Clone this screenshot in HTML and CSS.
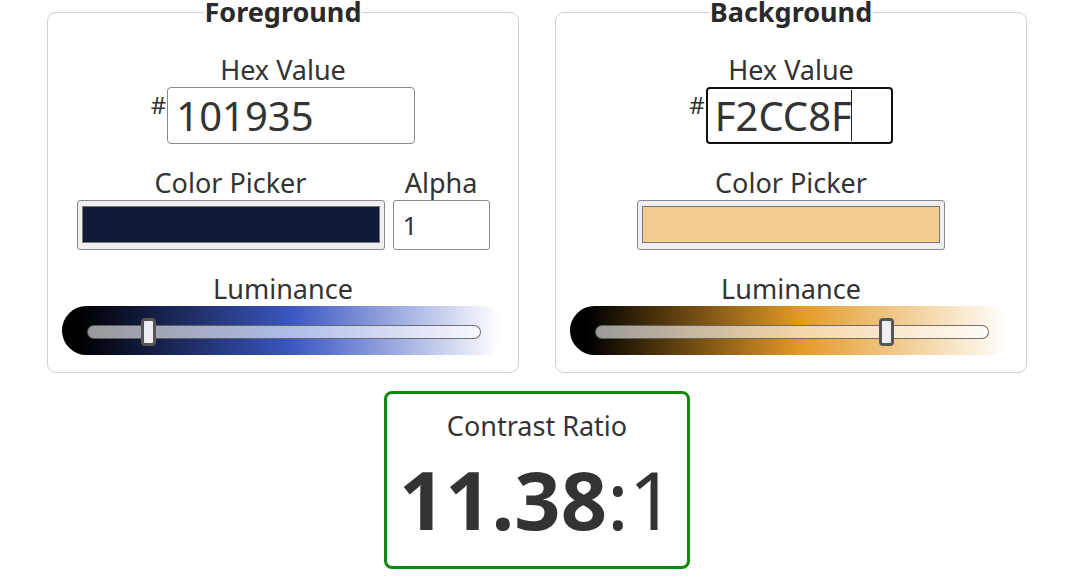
FILE: index.html
```html
<!DOCTYPE html>
<html lang="en">
<head>
<meta charset="utf-8">
<title>Contrast Checker</title>
<link rel="stylesheet" href="styles.css">
</head>
<body>
<main class="page">
  <div class="panels">
    <fieldset class="panel">
      <legend class="panel-title">Foreground</legend>
      <div class="field">
        <label class="lbl">Hex Value</label>
        <div class="hex-row">
          <span class="hash">#</span>
          <span class="hex hex-fg">101935</span>
        </div>
      </div>
      <div class="picker-row">
        <div class="field">
          <label class="lbl">Color Picker</label>
          <div class="swatch-box"><div class="swatch swatch-fg"></div></div>
        </div>
        <div class="field">
          <label class="lbl">Alpha</label>
          <span class="alpha">1</span>
        </div>
      </div>
      <div class="field lum-field">
        <label class="lbl">Luminance</label>
        <div class="lum lum-fg">
          <div class="track"><span class="thumb" style="left:53px"></span></div>
        </div>
      </div>
    </fieldset>

    <fieldset class="panel">
      <legend class="panel-title">Background</legend>
      <div class="field">
        <label class="lbl">Hex Value</label>
        <div class="hex-row">
          <span class="hash">#</span>
          <span class="hex hex-bg">F2CC8F<span class="caret"></span></span>
        </div>
      </div>
      <div class="picker-row">
        <div class="field">
          <label class="lbl">Color Picker</label>
          <div class="swatch-box"><div class="swatch swatch-bg"></div></div>
        </div>
      </div>
      <div class="field lum-field">
        <label class="lbl">Luminance</label>
        <div class="lum lum-bg">
          <div class="track"><span class="thumb" style="left:283px"></span></div>
        </div>
      </div>
    </fieldset>
  </div>

  <section class="result">
    <div class="result-label">Contrast Ratio</div>
    <div class="ratio"><strong class="ratio-num">11.38</strong>:1</div>
  </section>
</main>
</body>
</html>
```

FILE: styles.css
```css
* { box-sizing: border-box; }

html, body {
  margin: 0;
  padding: 0;
  background: #fff;
}

body {
  font-family: "Noto Sans", "Open Sans", sans-serif;
  color: #333;
}

.page {
  width: 980px;
  margin: 0 auto;
  padding-left: 4px;
  display: flex;
  flex-direction: column;
  align-items: center;
}

.panels {
  display: flex;
  gap: 36px;
}

.panel {
  width: 472px;
  min-width: 0;
  margin: 0;
  border: 1px solid #d0d0d0;
  border-radius: 9px;
  padding: 29px 12px 17px;
  display: flex;
  flex-direction: column;
  align-items: center;
}

.panel-title {
  font-size: 27px;
  font-weight: 700;
  line-height: 24px;
  padding: 0 1px;
  margin: 0 auto;
  color: #2a2a2a;
}

.field {
  display: flex;
  flex-direction: column;
  align-items: center;
}

.lbl {
  font-size: 27px;
  line-height: 34px;
  color: #333;
}

.hex-row {
  display: flex;
  align-items: flex-start;
}

.hash {
  font-size: 24px;
  line-height: 24px;
  margin-top: 6px;
  margin-right: 1px;
  color: #333;
}

.hex {
  position: relative;
  display: block;
  height: 57px;
  font-size: 40px;
  line-height: 55px;
  color: #333;
  border-radius: 4px;
  white-space: nowrap;
}

.hex-fg {
  width: 248px;
  border: 1px solid #8a8a8a;
  padding-left: 8px;
}

.hex-bg {
  width: 187px;
  border: 2px solid #111;
  padding-left: 7px;
  line-height: 53px;
}

.caret {
  position: absolute;
  top: 1px;
  bottom: 1px;
  left: 143px;
  width: 1px;
  background: #222;
}

.picker-row {
  display: flex;
  gap: 8px;
  margin-top: 22px;
}

.swatch-box {
  width: 308px;
  height: 50px;
  border: 1px solid #8a8a8a;
  border-radius: 3px;
  background: #efefef;
  padding: 5px 4px 6px 4px;
}

.swatch {
  height: 100%;
  border: 1px solid #777;
}

.swatch-fg { background: #101935; }
.swatch-bg { background: #f2cc8f; }

.alpha {
  display: block;
  width: 97px;
  height: 50px;
  border: 1px solid #8a8a8a;
  border-radius: 3px;
  font-size: 26px;
  line-height: 48px;
  padding-left: 9px;
  color: #333;
}

.lum-field {
  margin-top: 22px;
}

.lum {
  width: 443px;
  height: 49px;
  border-radius: 25px;
  padding: 19px 24px 0 25px;
}

.lum-fg {
  background: linear-gradient(to right, #000 4%, #3b57c4 52%, #fff 99%);
}

.lum-bg {
  background: linear-gradient(to right, #000 4%, #e49a26 52%, #fff 99%);
}

.track {
  position: relative;
  height: 14px;
  border: 1px solid rgba(70, 70, 70, 0.75);
  border-radius: 7px;
  background: rgba(255, 255, 255, 0.6);
}

.thumb {
  position: absolute;
  top: -8px;
  width: 15px;
  height: 28px;
  background: #eeeef2;
  border: 3px solid #555;
  border-radius: 4px;
}

.result {
  width: 306px;
  height: 178px;
  margin-top: 18px;
  border: 3px solid #0f8a0f;
  border-radius: 8px;
  padding-top: 15px;
  display: flex;
  flex-direction: column;
  align-items: center;
}

.result-label {
  font-size: 27px;
  line-height: 34px;
  color: #333;
}

.ratio {
  margin-top: 16px;
  font-size: 81px;
  line-height: 80px;
  font-weight: 400;
  color: #333;
}

.ratio-num {
  font-weight: 700;
}
```
